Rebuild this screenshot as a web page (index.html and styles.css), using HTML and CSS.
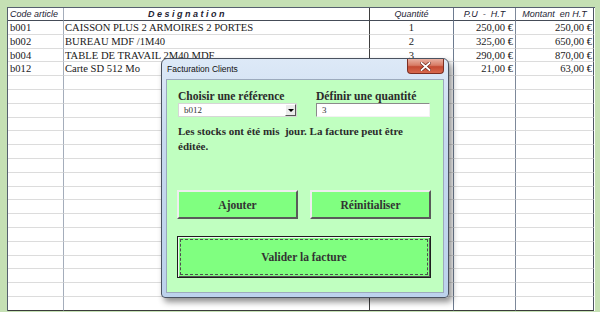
FILE: index.html
```html
<!DOCTYPE html>
<html lang="fr">
<head>
    <meta charset="UTF-8">
    <title>Facturation Clients</title>
    <link rel="stylesheet" href="styles.css">
</head>
<body>
    <div class="sheet">
        <div class="grid">
            <div class="head c1">Code article</div>
            <div class="head c2 design">D e s i g n a t i o n</div>
            <div class="head c3">Quantité</div>
            <div class="head c4">P.U&nbsp; - &nbsp;H.T</div>
            <div class="head c5">Montant &nbsp;en H.T</div>

            <div class="c1 code">b001</div>
            <div class="c2 lib">CAISSON PLUS 2 ARMOIRES 2 PORTES</div>
            <div class="c3 qte">1</div>
            <div class="c4 prix">250,00 €</div>
            <div class="c5 prix">250,00 €</div>

            <div class="c1 code">b002</div>
            <div class="c2 lib">BUREAU MDF /1M40</div>
            <div class="c3 qte">2</div>
            <div class="c4 prix">325,00 €</div>
            <div class="c5 prix">650,00 €</div>

            <div class="c1 code">b004</div>
            <div class="c2 lib">TABLE DE TRAVAIL 2M40 MDF</div>
            <div class="c3 qte">3</div>
            <div class="c4 prix">290,00 €</div>
            <div class="c5 prix">870,00 €</div>

            <div class="c1 code">b012</div>
            <div class="c2 lib">Carte SD 512 Mo</div>
            <div class="c3 qte">3</div>
            <div class="c4 prix">21,00 €</div>
            <div class="c5 prix">63,00 €</div>

            <div class="c1"></div><div class="c2"></div><div class="c3"></div><div class="c4"></div><div class="c5"></div>
            <div class="c1"></div><div class="c2"></div><div class="c3"></div><div class="c4"></div><div class="c5"></div>
            <div class="c1"></div><div class="c2"></div><div class="c3"></div><div class="c4"></div><div class="c5"></div>
            <div class="c1"></div><div class="c2"></div><div class="c3"></div><div class="c4"></div><div class="c5"></div>
            <div class="c1"></div><div class="c2"></div><div class="c3"></div><div class="c4"></div><div class="c5"></div>
            <div class="c1"></div><div class="c2"></div><div class="c3"></div><div class="c4"></div><div class="c5"></div>
            <div class="c1"></div><div class="c2"></div><div class="c3"></div><div class="c4"></div><div class="c5"></div>
            <div class="c1"></div><div class="c2"></div><div class="c3"></div><div class="c4"></div><div class="c5"></div>
            <div class="c1"></div><div class="c2"></div><div class="c3"></div><div class="c4"></div><div class="c5"></div>
            <div class="c1"></div><div class="c2"></div><div class="c3"></div><div class="c4"></div><div class="c5"></div>
            <div class="c1"></div><div class="c2"></div><div class="c3"></div><div class="c4"></div><div class="c5"></div>
            <div class="c1"></div><div class="c2"></div><div class="c3"></div><div class="c4"></div><div class="c5"></div>
            <div class="c1"></div><div class="c2"></div><div class="c3"></div><div class="c4"></div><div class="c5"></div>
            <div class="c1"></div><div class="c2"></div><div class="c3"></div><div class="c4"></div><div class="c5"></div>
            <div class="c1"></div><div class="c2"></div><div class="c3"></div><div class="c4"></div><div class="c5"></div>
            <div class="c1"></div><div class="c2"></div><div class="c3"></div><div class="c4"></div><div class="c5"></div>
            <div class="c1 last"></div><div class="c2 last"></div><div class="c3 last"></div><div class="c4 last"></div><div class="c5 last"></div>
        </div>

        <div class="dialog">
            <div class="titlebar">
                <span class="title">Facturation Clients</span>
                <button class="close" type="button">
                    <svg width="11" height="9" viewBox="0 0 11 9">
                        <path d="M1.5 1 L9.5 8 M9.5 1 L1.5 8" stroke="#6b2418" stroke-width="3.2" stroke-linecap="square"/>
                        <path d="M1.5 1 L9.5 8 M9.5 1 L1.5 8" stroke="#ffffff" stroke-width="1.8" stroke-linecap="square"/>
                    </svg>
                </button>
            </div>
            <div class="client">
                <div class="fields">
                    <div class="field">
                        <label for="ref">Choisir une référence</label>
                        <div class="combo" id="ref">
                            <span class="combo-val">b012</span>
                            <span class="combo-btn"></span>
                        </div>
                    </div>
                    <div class="field">
                        <label for="qte">Définir une quantité</label>
                        <input class="txt" id="qte" type="text" value="3">
                    </div>
                </div>
                <p class="msg">Les stocks ont été mis &nbsp;jour. La facture peut être éditée.</p>
                <div class="actions">
                    <button class="btn" type="button">Ajouter</button>
                    <button class="btn" type="button">Réinitialiser</button>
                </div>
                <button class="btn valider" type="button"><span class="focus">Valider la facture</span></button>
            </div>
        </div>
    </div>
</body>
</html>
```

FILE: styles.css
```css
body {
    margin: 0;
    background-color: #c5e0b4;
    font-family: "Liberation Serif", serif;
    color: #1a1a1a;
}

.sheet {
    position: relative;
    height: 312px;
    padding: 7px 0 0 7px;
    box-sizing: border-box;
    overflow: hidden;
}

/* feuille excel */
.grid {
    display: grid;
    grid-template-columns: 56px 306px 84px 62px 78px;
    grid-template-rows: 13px repeat(21, 13.8px);
    width: 587px;
    background-color: #ffffff;
    border-top: 1px solid #56606e;
    border-left: 1px solid #56606e;
}

.grid > div {
    box-sizing: border-box;
    border-bottom: 1px solid #dcdcdc;
    font-size: 10.6px;
    line-height: 13px;
    white-space: nowrap;
    overflow: hidden;
}

.c1 { border-right: 1px solid #a4adbb; }
.c2 { border-right: 1px solid #3e3e3e; }
.c3 { border-right: 1px solid #6d7b90; }
.c4 { border-right: 1px solid #7d8899; }
.c5 { border-right: 1px solid #4d5563; }

.grid > .head {
    font-family: "Liberation Sans", sans-serif;
    font-style: italic;
    font-size: 9px;
    line-height: 12px;
    color: #1c2333;
    text-align: center;
    border-bottom: 1px solid #454c58;
}

.grid > .head.c1 {
    text-align: left;
    padding-left: 2px;
}

.grid > .design {
    text-align: left;
    padding-left: 84px;
    font-weight: bold;
}

.grid > .last {
    border-bottom: 1px solid #3a3a3a;
}

.code { padding-left: 2px; }
.lib { padding-left: 1px; }
.qte { text-align: center; }
.prix {
    text-align: right;
    padding-right: 2px;
}
.c5.prix { padding-right: 1px; }

/* fenetre userform */
.dialog {
    position: absolute;
    left: 161px;
    top: 58px;
    width: 288px;
    height: 240px;
    box-sizing: border-box;
    padding: 0 4px 4px 4px;
    border: 1px solid #4a5260;
    border-radius: 6px 6px 4px 4px;
    background: linear-gradient(180deg, #dde9f7 0%, #c6d9ef 35%, #bcd2ec 100%);
    box-shadow: 3px 4px 6px rgba(0, 0, 0, 0.45);
    display: flex;
    flex-direction: column;
}

.titlebar {
    height: 20px;
    display: flex;
    justify-content: space-between;
    align-items: flex-start;
}

.title {
    font-family: "Liberation Sans", sans-serif;
    font-size: 8.5px;
    line-height: 20px;
    color: #111111;
    padding-left: 1px;
}

.close {
    width: 37px;
    height: 15px;
    padding: 0;
    border: 1px solid #7b2e22;
    border-top: none;
    border-radius: 0 0 4px 4px;
    background: linear-gradient(180deg, #e9b0a2 0%, #d87c66 45%, #c44a33 55%, #d8694d 100%);
    display: flex;
    align-items: center;
    justify-content: center;
}

.client {
    flex: 1;
    background-color: #c0ffc0;
    border: 1px solid #9caabd;
    padding: 10px 0 0 10px;
    display: flex;
    flex-direction: column;
    color: #2e2e2e;
}

.fields {
    display: flex;
    gap: 19px;
    margin-left: 1px;
}

.field {
    display: flex;
    flex-direction: column;
}

label {
    font-weight: bold;
    font-size: 11.6px;
    line-height: 13px;
    color: #2b2b2b;
}

.combo {
    width: 119px;
    height: 14px;
    box-sizing: border-box;
    background-color: #ffffff;
    border: 1px solid #d6d6d6;
    display: flex;
    align-items: center;
    justify-content: space-between;
}

.combo-val,
.txt {
    font-family: "Liberation Serif", serif;
    font-size: 9px;
    color: #333333;
}

.combo-val { padding-left: 5px; }

.combo-btn {
    width: 11px;
    height: 12px;
    box-sizing: border-box;
    background-color: #ececec;
    border: 1px solid;
    border-color: #ffffff #555555 #555555 #ffffff;
    position: relative;
}

.combo-btn::after {
    content: "";
    position: absolute;
    left: 2px;
    top: 4px;
    border-left: 3px solid transparent;
    border-right: 3px solid transparent;
    border-top: 3px solid #000000;
}

.txt {
    width: 114px;
    height: 14px;
    box-sizing: border-box;
    margin: 0;
    padding: 0 0 0 5px;
    background-color: #ffffff;
    border: 1px solid;
    border-color: #8a8a8a #f2f2f2 #f2f2f2 #8a8a8a;
    outline: none;
}

.msg {
    margin: 7px 0 0 1px;
    width: 250px;
    font-weight: bold;
    font-size: 11px;
    line-height: 15px;
    color: #2b2b2b;
}

.actions {
    display: flex;
    gap: 12px;
    margin-top: 36px;
}

.btn {
    font-family: "Liberation Serif", serif;
    font-weight: bold;
    font-size: 11.5px;
    color: #333333;
    background-color: #80ff80;
    cursor: pointer;
}

.actions .btn {
    width: 121px;
    height: 29px;
    border: 2px solid;
    border-color: #eeeeee #5a5a5a #5a5a5a #eeeeee;
}

.valider {
    width: 254px;
    height: 42px;
    margin-top: 17px;
    padding: 2px;
    border: 1px solid #1e1e1e;
    box-shadow: inset 1px 1px 0 #f2f2f2, inset -1px -1px 0 #555555;
    display: flex;
}

.focus {
    flex: 1;
    display: flex;
    align-items: center;
    justify-content: center;
    border: 1px dashed #4f4f4f;
}
```
